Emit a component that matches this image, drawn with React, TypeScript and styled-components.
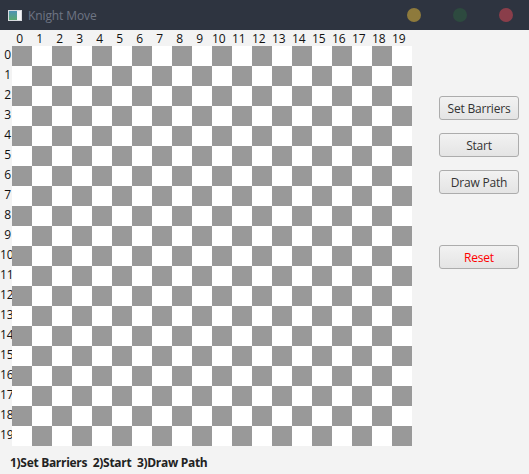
import React from "react";
import styled, { createGlobalStyle } from "styled-components";

const Global = createGlobalStyle`
  html, body { margin: 0; padding: 0; background: #f3f3f3; }
  body { font-family: "Open Sans", "Noto Sans", sans-serif; }
`;

const Window = styled.div`
  width: 529px;
  height: 474px;
  display: flex;
  flex-direction: column;
  background: #f3f3f3;
  overflow: hidden;
`;

const TitleBar = styled.div`
  height: 30px;
  flex: none;
  background: #2e3440;
  display: flex;
  align-items: center;
  padding-left: 8px;
  box-sizing: border-box;
`;

const Title = styled.span`
  margin-left: 6px;
  font-size: 12px;
  color: #6e7584;
  letter-spacing: -0.1px;
`;

const Lights = styled.div`
  margin-left: auto;
  display: flex;
  gap: 32px;
  padding-right: 16px;
`;

const Light = styled.span<{ $c: string }>`
  width: 14px;
  height: 14px;
  border-radius: 50%;
  background: ${(p) => p.$c};
`;

const Body = styled.div`
  display: flex;
  flex: 1;
`;

const Left = styled.div`
  display: flex;
  flex-direction: column;
`;

const Board = styled.div`
  display: grid;
  grid-template-columns: 12px repeat(20, 20px);
  grid-template-rows: 16px repeat(20, 20px);
  font-size: 12px;
  color: #111;
`;

const ColLabel = styled.div`
  text-align: right;
  padding-right: 9px;
  line-height: 16px;
  padding-top: 1px;
`;

const RowLabel = styled.div`
  text-align: right;
  padding-right: 1px;
  line-height: 18px;
`;

const Cell = styled.div<{ $dark: boolean }>`
  background: ${(p) => (p.$dark ? "#999999" : "#ffffff")};
`;

const Footer = styled.div`
  padding: 9px 0 0 10px;
  font-size: 12px;
  font-weight: 700;
  line-height: 16px;
  color: #222;
  white-space: pre;
  letter-spacing: -0.3px;
`;

const Buttons = styled.div`
  display: flex;
  flex-direction: column;
  margin-left: 27px;
  padding-top: 66px;
`;

const Btn = styled.button<{ $gap?: number; $red?: boolean }>`
  width: 80px;
  height: 24px;
  margin-top: ${(p) => p.$gap ?? 0}px;
  border: 1px solid #acacac;
  border-radius: 3px;
  background: linear-gradient(#f2f2f2, #e4e4e4);
  font-family: "Open Sans", "Noto Sans", sans-serif;
  font-size: 12px;
  color: ${(p) => (p.$red ? "#ff0000" : "#333333")};
  padding: 0;
  letter-spacing: -0.2px;
`;

const AppIcon = () => (
  <svg width="14" height="11" viewBox="0 0 14 11">
    <rect x="0" y="0" width="14" height="11" fill="#d8dbe0" />
    <defs>
      <linearGradient id="ig" x1="0" y1="0" x2="0" y2="1">
        <stop offset="0" stopColor="#4f93b5" />
        <stop offset="1" stopColor="#5aa870" />
      </linearGradient>
    </defs>
    <rect x="1" y="1" width="8" height="9" fill="url(#ig)" />
    <rect x="9" y="1" width="4" height="9" fill="#f4f5f7" />
  </svg>
);

const N = 20;

export default function App() {
  const cells: React.ReactNode[] = [];
  cells.push(<div key="corner" />);
  for (let c = 0; c < N; c++) cells.push(<ColLabel key={`c${c}`}>{c}</ColLabel>);
  for (let r = 0; r < N; r++) {
    cells.push(<RowLabel key={`r${r}`}>{r}</RowLabel>);
    for (let c = 0; c < N; c++) {
      cells.push(<Cell key={`${r}-${c}`} $dark={(r + c) % 2 === 0} />);
    }
  }
  return (
    <>
      <Global />
      <Window>
        <TitleBar>
          <AppIcon />
          <Title>Knight Move</Title>
          <Lights>
            <Light $c="#8e7a3c" />
            <Light $c="#2d4a3f" />
            <Light $c="#8a3e4a" />
          </Lights>
        </TitleBar>
        <Body>
          <Left>
            <Board>{cells}</Board>
            <Footer>{"1)Set Barriers  2)Start  3)Draw Path"}</Footer>
          </Left>
          <Buttons>
            <Btn>Set Barriers</Btn>
            <Btn $gap={13}>Start</Btn>
            <Btn $gap={13}>Draw Path</Btn>
            <Btn $gap={51} $red>Reset</Btn>
          </Buttons>
        </Body>
      </Window>
    </>
  );
}
